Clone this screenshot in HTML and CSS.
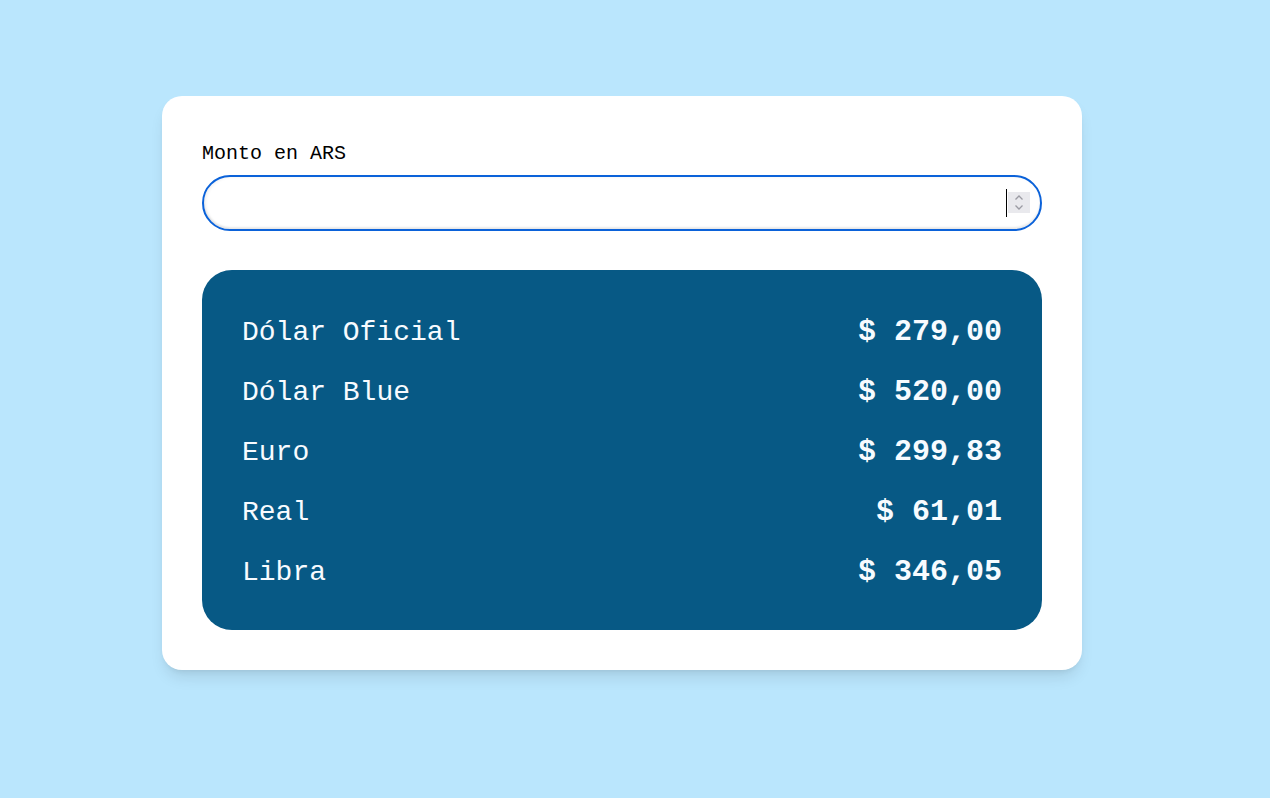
FILE: index.html
```html
<!DOCTYPE html>
<html lang="es">
<head>
<meta charset="utf-8">
<title>Conversor</title>
<link rel="stylesheet" href="styles.css">
</head>
<body>
<main class="card">
  <label class="label" for="monto">Monto en ARS</label>
  <div class="field">
    <input class="amount" id="monto" type="number">
    <span class="caret"></span>
    <span class="spin">
      <svg width="22" height="21" viewBox="0 0 22 21" aria-hidden="true">
        <path d="M7.5 7.5 L11 4 L14.5 7.5" fill="none" stroke="#9b9ba3" stroke-width="1.3"/>
        <path d="M7.5 13.5 L11 17 L14.5 13.5" fill="none" stroke="#9b9ba3" stroke-width="1.3"/>
      </svg>
    </span>
  </div>
  <section class="results">
    <div class="row"><span class="name">Dólar Oficial</span><span class="value">$ 279,00</span></div>
    <div class="row"><span class="name">Dólar Blue</span><span class="value">$ 520,00</span></div>
    <div class="row"><span class="name">Euro</span><span class="value">$ 299,83</span></div>
    <div class="row"><span class="name">Real</span><span class="value">$ 61,01</span></div>
    <div class="row"><span class="name">Libra</span><span class="value">$ 346,05</span></div>
  </section>
</main>
</body>
</html>
```

FILE: styles.css
```css
html, body {
  margin: 0;
  padding: 0;
  background: #bae6fd;
  height: 100%;
}
body {
  font-family: "Liberation Mono", "DejaVu Sans Mono", monospace;
  padding-top: 96px;
  box-sizing: border-box;
}
.card {
  width: 920px;
  margin-left: 162px;
  box-sizing: border-box;
  background: #ffffff;
  border-radius: 20px;
  padding: 44px 40px 40px;
  box-shadow: 0 10px 15px -3px rgba(0, 0, 0, 0.1), 0 4px 6px -4px rgba(0, 0, 0, 0.1);
}
.label {
  display: block;
  font-size: 20px;
  line-height: 28px;
  color: #000;
}
.field {
  position: relative;
  margin-top: 7px;
}
.amount {
  display: block;
  width: 100%;
  height: 56px;
  box-sizing: border-box;
  border: 2px solid #0b62d9;
  border-radius: 28px;
  outline: none;
  padding: 0 40px 0 20px;
  font-family: inherit;
  font-size: 20px;
  text-align: right;
  box-shadow: inset 0 -2px 2px rgba(0, 0, 0, 0.08), inset 2px 0 3px rgba(0, 0, 0, 0.06);
  background: #fff;
  -moz-appearance: textfield;
}
.amount::-webkit-inner-spin-button,
.amount::-webkit-outer-spin-button {
  -webkit-appearance: none;
  margin: 0;
}
.caret {
  position: absolute;
  left: 804px;
  top: 14px;
  width: 1px;
  height: 28px;
  background: #000;
}
.spin {
  position: absolute;
  left: 806px;
  top: 17px;
  width: 22px;
  height: 21px;
  background: #e9e9ed;
  display: flex;
}
.results {
  margin-top: 39px;
  background: #075985;
  border-radius: 30px;
  padding: 32px 40px 28px;
  color: #f7fbff;
}
.row {
  display: flex;
  justify-content: space-between;
  align-items: center;
  height: 60px;
}
.name {
  font-size: 28px;
}
.value {
  font-size: 30px;
  font-weight: 700;
}
```
